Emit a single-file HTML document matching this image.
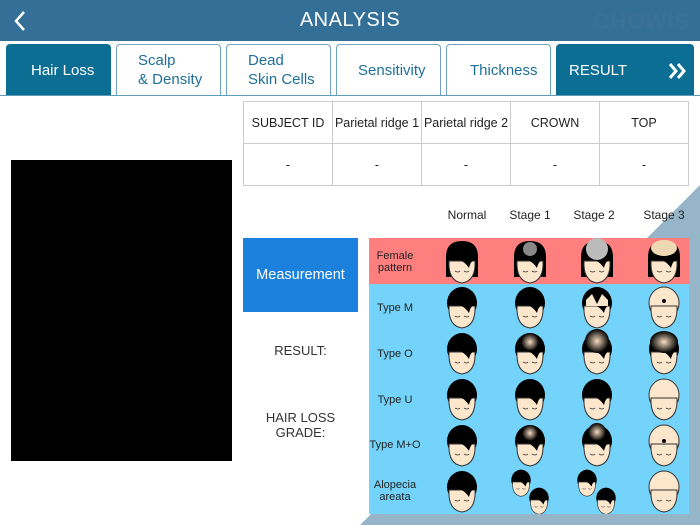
<!DOCTYPE html>
<html><head><meta charset="utf-8"><style>
body{margin:0;width:700px;height:525px;overflow:hidden;background:#fff;font-family:"Liberation Sans",sans-serif;position:relative}
.hdr{position:absolute;left:0;top:0;width:700px;height:41px;background:#336F96}
.hdr .t{position:absolute;left:0;right:0;top:9px;text-align:center;color:#fff;font-size:20px;letter-spacing:.5px}
.hdr .logo{position:absolute;right:10px;top:9px;color:#3a7196;font-size:22px;font-weight:bold;letter-spacing:1px}
.tab{position:absolute;top:44px;height:51px;border:1px solid #6fa3c2;border-bottom:none;border-radius:4px 4px 0 0;background:#fff;color:#1f6f99;font-size:15px;box-sizing:border-box;display:flex;align-items:center;padding-left:21px;line-height:19px}
.tab.a{background:#0D6E94;color:#fff;border-color:#0D6E94}
.line{position:absolute;left:0;top:95px;width:700px;height:1px;background:#5f9ab9}
table{position:absolute;left:243px;top:101px;border-collapse:collapse;font-size:12.5px;color:#222}
td{border:1px solid #ccc;text-align:center;height:41px;padding:0}
.img{position:absolute;left:11px;top:160px;width:221px;height:301px;background:#000}
.meas{position:absolute;left:243px;top:238px;width:115px;height:74px;background:#1C80DD;color:#fff;font-size:14.5px;display:flex;align-items:center;justify-content:center}
.lbl{position:absolute;left:243px;width:115px;text-align:center;color:#333;font-size:13px;line-height:15px}
.st{position:absolute;top:208px;font-size:12px;color:#222;width:60px;text-align:center}
</style></head><body>
<div class="hdr"><svg style="position:absolute;left:12px;top:10px" width="16" height="22"><path d="M12 2 L4 11 L12 20" stroke="#fff" stroke-width="2.5" fill="none"/></svg><div class="t">ANALYSIS</div><div class="logo">CHOWIS</div></div>
<div class="tab a" style="left:6px;width:105px;padding-left:24px">Hair Loss</div>
<div class="tab" style="left:116px;width:105px">Scalp<br>&amp; Density</div>
<div class="tab" style="left:226px;width:105px">Dead<br>Skin Cells</div>
<div class="tab" style="left:336px;width:105px">Sensitivity</div>
<div class="tab" style="left:446px;width:105px;padding-left:23px">Thickness</div>
<div class="tab a" style="left:556px;width:138px;padding-left:12px">RESULT<svg style="position:absolute;right:6px;top:17px" width="20" height="18"><path d="M3 2 L9 9 L3 16 M11 2 L17 9 L11 16" stroke="#fff" stroke-width="3" fill="none"/></svg></div>
<div class="line"></div>
<table><tr><td style="width:88px">SUBJECT ID</td><td style="width:88px">Parietal ridge 1</td><td style="width:88px">Parietal ridge 2</td><td style="width:88px">CROWN</td><td style="width:88px">TOP</td></tr>
<tr><td>-</td><td>-</td><td>-</td><td>-</td><td>-</td></tr></table>
<div class="img"></div>
<svg style="position:absolute;left:0;top:0" width="700" height="525"><polygon points="700,185 700,525 360,525" fill="#97B5C9"/></svg>
<div class="st" style="left:437px">Normal</div><div class="st" style="left:500px">Stage 1</div><div class="st" style="left:564px">Stage 2</div><div class="st" style="left:634px">Stage 3</div>
<div class="meas">Measurement</div>
<div class="lbl" style="top:343px">RESULT:</div>
<div class="lbl" style="top:410px">HAIR LOSS<br>GRADE:</div>
<svg style="position:absolute;left:369px;top:238px" width="320" height="276" font-family="Liberation Sans" font-size="11" fill="#222">
<defs>
<radialGradient id="sp"><stop offset="0" stop-color="#f7dcc0"/><stop offset="1" stop-color="#000"/></radialGradient>
<g id="face"><path d="M-13 0 Q-14 20 0 22 Q14 20 13 0 Z" fill="#FCE6CC" stroke="#333" stroke-width="1"/><path d="M-7 10 q3 2 5 0 M2 10 q3 2 5 0" stroke="#333" fill="none" stroke-width=".8"/></g>
<g id="m"><ellipse cx="0" cy="-3" rx="15" ry="16" fill="#000"/><use href="#face"/><path d="M-14 -2 Q0 -4 7 7 Q9 -2 14 0 L14 -4 L-14 -4Z" fill="#000"/></g>
<g id="mb"><ellipse cx="0" cy="-3" rx="15" ry="16" fill="#FCE6CC" stroke="#333"/><use href="#face"/></g>
<g id="f"><path d="M-16 -4 Q-16 -20 0 -20 Q16 -20 16 -4 L16 16 L-16 16Z" fill="#000"/><use href="#face"/><path d="M-14 -2 Q0 -4 7 7 Q9 -2 14 0 L14 -4 L-14 -4Z" fill="#000"/></g>
</defs>
<rect width="320" height="46" fill="#FF7F7F"/><rect y="46" width="320" height="230" fill="#74D3FB"/>
<text x="26" y="21" text-anchor="middle">Female</text><text x="26" y="33" text-anchor="middle">pattern</text>
<text x="26" y="73" text-anchor="middle">Type M</text><text x="26" y="119" text-anchor="middle">Type O</text><text x="26" y="165" text-anchor="middle">Type U</text><text x="26" y="210" text-anchor="middle">Type M+O</text>
<text x="26" y="250" text-anchor="middle">Alopecia</text><text x="26" y="262" text-anchor="middle">areata</text>
<use href="#f" x="93" y="23"/><use href="#f" x="161" y="23"/><circle cx="161" cy="11" r="7" fill="#888"/><use href="#f" x="228" y="23"/><circle cx="228" cy="11" r="11" fill="#bbb"/><use href="#f" x="295" y="23"/><ellipse cx="295" cy="10" rx="13" ry="8" fill="#EFD9B5"/>
<use href="#m" x="93" y="68"/><use href="#m" x="161" y="68"/><use href="#m" x="228" y="68"/><path d="M217 62 L223 56 L228 66 L233 56 L239 62 L239 68 L217 68Z" fill="#FCE6CC"/><use href="#mb" x="295" y="68"/><circle cx="295" cy="63" r="2" fill="#000"/>
<use href="#m" x="93" y="114"/><use href="#m" x="161" y="114"/><circle cx="161" cy="104" r="9" fill="url(#sp)"/><use href="#m" x="228" y="114"/><circle cx="228" cy="103" r="12" fill="url(#sp)"/><use href="#m" x="295" y="114"/><ellipse cx="295" cy="104" rx="14" ry="11" fill="url(#sp)"/>
<use href="#m" x="93" y="160"/><use href="#m" x="161" y="160"/><use href="#m" x="228" y="160"/><use href="#mb" x="295" y="160"/>
<use href="#m" x="93" y="206"/><use href="#m" x="161" y="206"/><circle cx="161" cy="195" r="8" fill="url(#sp)"/><use href="#m" x="228" y="206"/><circle cx="228" cy="194" r="9" fill="url(#sp)"/><use href="#mb" x="295" y="206"/><circle cx="295" cy="203" r="2" fill="#000"/>
<use href="#m" x="93" y="252"/>
<use href="#m" transform="translate(152,244) scale(.65)"/><use href="#m" transform="translate(170,262) scale(.65)"/>
<use href="#m" transform="translate(218,244) scale(.65)"/><use href="#m" transform="translate(237,262) scale(.65)"/>
<use href="#mb" x="295" y="252"/>
</svg>
</body></html>
